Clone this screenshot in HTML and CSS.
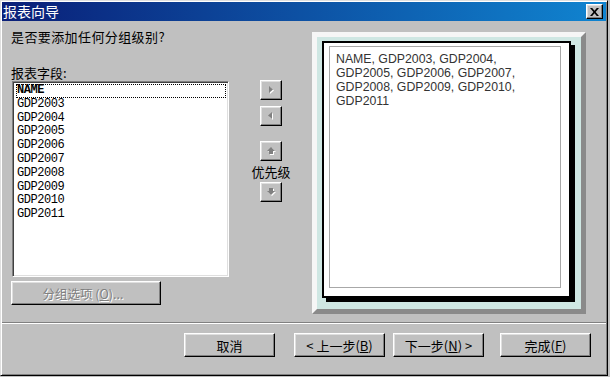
FILE: index.html
```html
<!DOCTYPE html>
<html lang="zh-CN">
<head>
  <meta charset="UTF-8">
  <title>报表向导</title>
  <link rel="stylesheet" href="styles.css">
</head>
<body>

  <div class="window">
    <!-- TITLE BAR -->
    <div class="titlebar">
      <span class="title">报表向导</span>
      <button class="btn close">
        <svg width="9" height="8" viewBox="0 0 9 8"><path d="M0 0h2.2l2.3 2.7L6.8 0H9L5.6 4 9 8H6.8L4.5 5.3 2.2 8H0l3.4-4z" fill="#000"/></svg>
      </button>
    </div>

    <div class="main">
      <div class="setup">
        <div class="question">是否要添加任何分组级别?</div>
        <div class="fields">
          <div class="field-col">
            <div class="label">报表字段:</div>
            <ul class="listbox">
              <li class="focused">NAME</li>
              <li>GDP2003</li>
              <li>GDP2004</li>
              <li>GDP2005</li>
              <li>GDP2006</li>
              <li>GDP2007</li>
              <li>GDP2008</li>
              <li>GDP2009</li>
              <li>GDP2010</li>
              <li>GDP2011</li>
            </ul>
            <button class="btn options" disabled>分组选项 (<u>O</u>)...</button>
          </div>

          <div class="mover">
            <button class="btn arrow">
              <svg width="6" height="9" viewBox="0 0 6 9"><path d="M2 1l4 3.5L2 8z" fill="#fff"/><path d="M1 0l4 3.5L1 7z" fill="#808080"/></svg>
            </button>
            <button class="btn arrow">
              <svg width="6" height="9" viewBox="0 0 6 9"><path d="M5 1L1 4.5 5 8z" fill="#fff"/><path d="M4 0L0 3.5 4 7z" fill="#808080"/></svg>
            </button>
            <button class="btn arrow gap">
              <svg width="9" height="8" viewBox="0 0 9 8"><path d="M5 1l4 4H7v3H3V5H1z" fill="#fff"/><path d="M4 0l4 4H6v3H2V4H0z" fill="#808080"/></svg>
            </button>
            <div class="priority">优先级</div>
            <button class="btn arrow">
              <svg width="9" height="8" viewBox="0 0 9 8"><path d="M3 1h4v3h2L5 8 1 4h2z" fill="#fff"/><path d="M2 0h4v3h2L4 7 0 3h2z" fill="#808080"/></svg>
            </button>
          </div>
        </div>
      </div>

      <!-- PREVIEW -->
      <div class="preview">
        <div class="sheet">
          <div class="sheet-text">NAME, GDP2003, GDP2004, GDP2005, GDP2006, GDP2007, GDP2008, GDP2009, GDP2010, GDP2011</div>
        </div>
      </div>
    </div>

    <div class="sep"></div>

    <div class="footer">
      <button class="btn cmd">取消</button>
      <button class="btn cmd back">&lt; 上一步(<u>B</u>)</button>
      <button class="btn cmd next">下一步(<u>N</u>) &gt;</button>
      <button class="btn cmd finish">完成(<u>F</u>)</button>
    </div>
  </div>

</body>
</html>
```

FILE: styles.css
```css
:root {
  --face: #c0c0c0;
  --shadow: #808080;
  --dark: #000;
  --light: #dfdfdf;
  --cjk: "Noto Sans CJK SC", "Liberation Sans", sans-serif;
}
body {
  margin: 0;
  background: var(--face);
  font-family: var(--cjk);
  font-size: 13px;
  color: #000;
}
.window {
  box-sizing: border-box;
  width: 608px;
  height: 376px;
  padding: 1px;
  border: 1px solid;
  border-color: var(--light) var(--dark) var(--dark) var(--light);
  box-shadow: inset 1px 1px #fff, inset -1px -1px var(--shadow);
  background: var(--face);
}
.titlebar {
  height: 19px;
  display: flex;
  align-items: center;
  justify-content: space-between;
  background: linear-gradient(to right, #0a1f78, #1084d0);
}
.title {
  color: #fff;
  font-size: 14px;
  line-height: 19px;
  padding-left: 1px;
}
.btn {
  box-sizing: border-box;
  padding: 0;
  margin: 0;
  background: var(--face);
  border: 1px solid;
  border-color: #fff var(--dark) var(--dark) #fff;
  box-shadow: inset -1px -1px var(--shadow), inset 1px 1px var(--light);
  font-family: var(--cjk);
  font-size: 13px;
  color: #000;
  display: flex;
  align-items: center;
  justify-content: center;
}
.close {
  width: 17px;
  height: 15px;
  margin-right: 3px;
}
.main {
  height: 301px;
  display: flex;
  padding-left: 9px;
}
.setup {
  width: 271px;
  padding-top: 8px;
}
.question {
  line-height: 16px;
  letter-spacing: 0.4px;
}
.fields {
  display: flex;
  margin-top: 19px;
}
.field-col {
  width: 218px;
}
.label {
  line-height: 17px;
}
.listbox {
  box-sizing: border-box;
  width: 217px;
  height: 196px;
  margin: 0 0 0 1px;
  padding: 2px 2px 0 2px;
  list-style: none;
  background: #fff;
  border: 1px solid;
  border-color: var(--shadow) #fff #fff var(--shadow);
  box-shadow: inset 1px 1px #404040, inset -1px -1px var(--light);
  font-family: "Liberation Mono", monospace;
  font-size: 12px;
  letter-spacing: -0.45px;
  line-height: 13.8px;
}
.listbox li {
  padding-left: 1px;
  margin-left: 1px;
}
.listbox .focused {
  font-weight: bold;
  outline: 1px dotted #000;
  outline-offset: -1px;
}
.options {
  width: 150px;
  height: 24px;
  margin-top: 4px;
  padding-right: 6px;
  font-size: 12.5px;
  color: var(--shadow);
  text-shadow: 1px 1px #fff;
}
.options u {
  text-decoration-color: var(--shadow);
}
.mover {
  margin-left: 31px;
  padding-top: 16px;
  display: flex;
  flex-direction: column;
  align-items: center;
  width: 22px;
}
.arrow {
  width: 22px;
  height: 20px;
  margin-bottom: 6px;
  flex: none;
}
.arrow.gap {
  margin-top: 9px;
  margin-bottom: 0;
}
.priority {
  line-height: 19px;
  white-space: nowrap;
  margin: 1px 0 1px;
}
.preview {
  box-sizing: border-box;
  width: 274px;
  height: 282px;
  margin: 11px 0 0 30px;
  padding: 4px 10px 11px 5px;
  border: 5px solid;
  border-color: #f6f6f6 #8a8a8a #8a8a8a #f6f6f6;
  background: #cfe7e3;
}
.sheet {
  box-sizing: border-box;
  height: 100%;
  padding: 3px 8px 8px 5px;
  background: #fff;
  border: 2px solid #000;
  box-shadow: 4px 4px 0 #000;
}
.sheet-text {
  box-sizing: border-box;
  height: 100%;
  padding: 5px 36px 5px 6px;
  border: 1px solid #a8a8a8;
  font-family: "Liberation Sans", Arial, sans-serif;
  font-size: 12.3px;
  line-height: 14px;
  color: #333;
}
.sep {
  border-top: 1px solid var(--shadow);
  border-bottom: 1px solid #fff;
  box-sizing: border-box;
  height: 2px;
}
.footer {
  display: flex;
  justify-content: flex-end;
  padding: 9px 15px 0 0;
}
.cmd {
  width: 91px;
  height: 24px;
}
.back {
  margin-left: 19px;
}
.next {
  margin-left: 8px;
}
.finish {
  margin-left: 16px;
}
```
